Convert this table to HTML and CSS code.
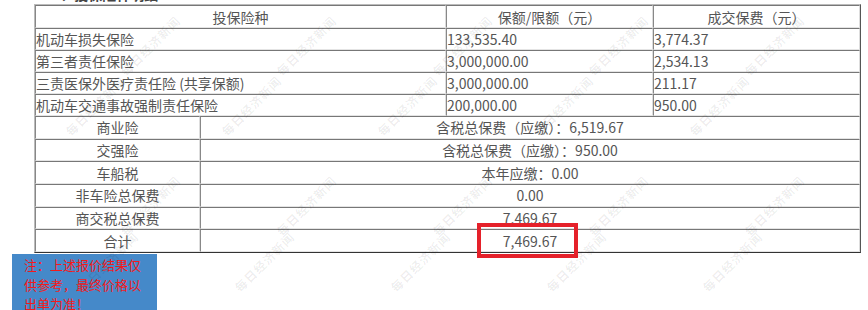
FILE: index.html
```html
<!DOCTYPE html>
<html lang="zh-CN">
<head>
    <meta charset="UTF-8">
    <title>报价明细</title>
    <link rel="stylesheet" href="styles.css">
</head>
<body>
<div class="page">

    <!-- section title, mostly scrolled off the top -->
    <div class="title-clip">
        <div class="title">1、投保险种明细</div>
    </div>

    <!-- Quote table -->
    <table class="quote">
        <colgroup>
            <col class="c-name">
            <col class="c-gap">
            <col class="c-amount">
            <col class="c-fee">
        </colgroup>
        <tr class="head">
            <td colspan="2">投保险种</td>
            <td>保额/限额（元）</td>
            <td>成交保费（元）</td>
        </tr>
        <tr>
            <td colspan="2">机动车损失保险</td>
            <td>133,535.40</td>
            <td>3,774.37</td>
        </tr>
        <tr>
            <td colspan="2">第三者责任保险</td>
            <td>3,000,000.00</td>
            <td>2,534.13</td>
        </tr>
        <tr>
            <td colspan="2">三责医保外医疗责任险 (共享保额)</td>
            <td>3,000,000.00</td>
            <td>211.17</td>
        </tr>
        <tr>
            <td colspan="2">机动车交通事故强制责任保险</td>
            <td>200,000.00</td>
            <td>950.00</td>
        </tr>
        <tr class="sum">
            <td>商业险</td>
            <td colspan="3">含税总保费（应缴）：6,519.67</td>
        </tr>
        <tr class="sum">
            <td>交强险</td>
            <td colspan="3">含税总保费（应缴）：950.00</td>
        </tr>
        <tr class="sum">
            <td>车船税</td>
            <td colspan="3">本年应缴：0.00</td>
        </tr>
        <tr class="sum">
            <td>非车险总保费</td>
            <td colspan="3">0.00</td>
        </tr>
        <tr class="sum">
            <td>商交税总保费</td>
            <td colspan="3">7,469.67</td>
        </tr>
        <tr class="sum">
            <td>合计</td>
            <td colspan="3"><span class="marked">7,469.67</span></td>
        </tr>
    </table>

    <!-- Note -->
    <div class="note">注：上述报价结果仅供参考，最终价格以出单为准！</div>

    <!-- Watermark layer -->
    <div class="wm-row row-a">
        <span>每日经济新闻</span><span>每日经济新闻</span><span>每日经济新闻</span><span>每日经济新闻</span><span>每日经济新闻</span>
    </div>
    <div class="wm-row row-b">
        <span>每日经济新闻</span><span>每日经济新闻</span><span>每日经济新闻</span><span>每日经济新闻</span><span>每日经济新闻</span>
    </div>
    <div class="wm-row row-c">
        <span>每日经济新闻</span><span>每日经济新闻</span><span>每日经济新闻</span><span>每日经济新闻</span><span>每日经济新闻</span>
    </div>
    <div class="wm-row row-d">
        <span>每日经济新闻</span><span>每日经济新闻</span><span>每日经济新闻</span><span>每日经济新闻</span><span>每日经济新闻</span>
    </div>

</div>
</body>
</html>
```

FILE: styles.css
```css
/* Basic Styles */
body {
    margin: 0;
    background: #fff;
    font-family: "Noto Sans CJK SC", "Noto Sans", sans-serif;
    color: #555;
}

.page {
    position: relative;
    width: 868px;
    height: 310px;
    overflow: hidden;
}

/* Title that is cut off at the top */
.title-clip {
    height: 4px;
    overflow: hidden;
    padding-left: 52px;
}

.title {
    margin-top: -16px;
    font-size: 14px;
    line-height: 20px;
    font-weight: bold;
    color: #444;
}

/* Quote table */
.quote {
    margin-left: 34px;
    width: 825px;
    table-layout: fixed;
    border-collapse: separate;
    border-spacing: 0;
    border: 1px solid;
    border-color: #bbb #555 #333 #bbb;
    font-size: 14px;
}

.c-name { width: 165px; }
.c-gap { width: 246px; }
.c-amount { width: 207px; }
.c-fee { width: 207px; }

.quote td {
    padding: 0;
    height: 20px;
    line-height: 20px;
    border: 1px solid;
    border-color: #777 #ddd #e4e4e4 #888;
    white-space: nowrap;
    overflow: visible;
}

.quote .head td {
    height: 21px;
    text-align: center;
}

.quote .sum td {
    height: 20.7px;
    text-align: center;
}

.marked {
    position: relative;
}

.marked::after {
    content: "";
    position: absolute;
    left: -26px;
    right: -21px;
    top: -8px;
    bottom: -7px;
    border: 4px solid #e5212a;
}

/* Note box */
.note {
    width: 121px;
    margin: 1px 0 0 12px;
    padding: 1px 12px 8px 12px;
    background-color: #4589c9;
    color: #f41a1a;
    font-size: 13px;
    line-height: 19.5px;
}

/* Watermark */
.wm-row {
    position: absolute;
    display: flex;
    pointer-events: none;
}

.wm-row span {
    width: 156px;
    text-align: center;
    font-family: "Noto Sans CJK SC", sans-serif;
    font-weight: bold;
    font-size: 12px;
    letter-spacing: 1px;
    color: rgba(0, 0, 0, 0.07);
    transform: rotate(-45deg);
}

.row-a { left: 72px; top: 37px; }
.row-b { left: 17px; top: 97px; }
.row-c { left: 72px; top: 197px; }
.row-d { left: 30px; top: 253px; }
```
